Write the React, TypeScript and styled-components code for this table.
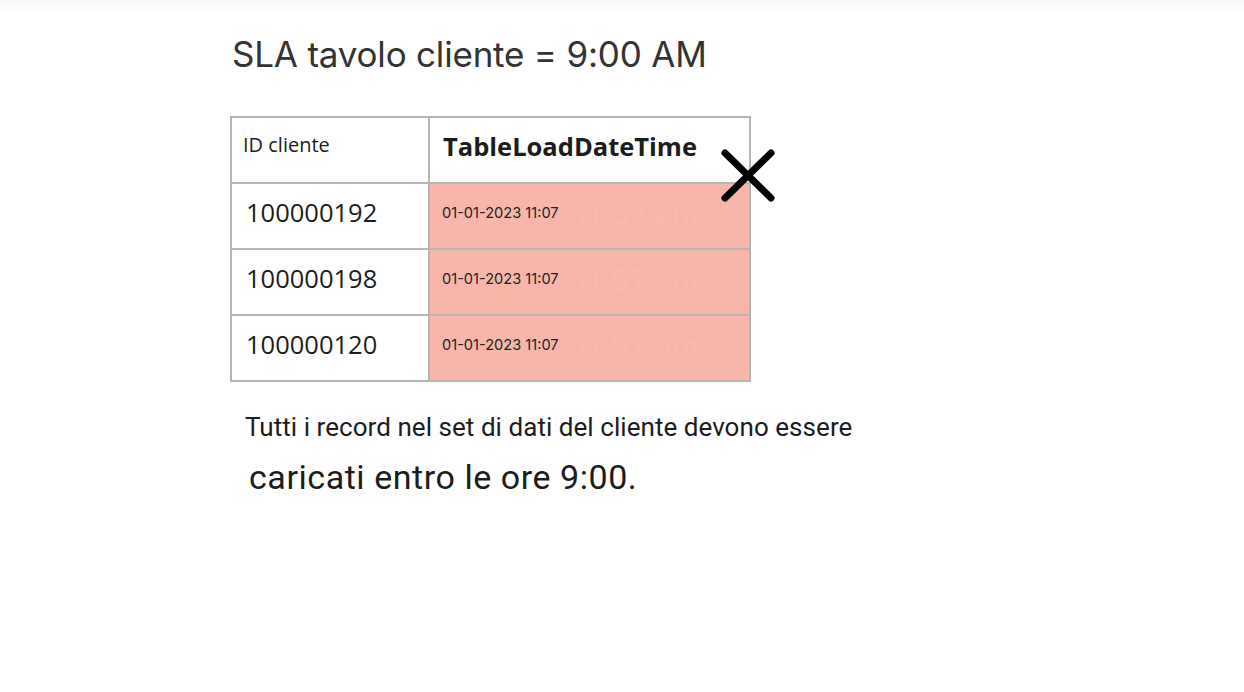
import styled, { createGlobalStyle } from "styled-components"

const GlobalStyle = createGlobalStyle`
  html, body {
    margin: 0;
    padding: 0;
    background: #ffffff;
  }
  body {
    font-family: "Open Sans", "Noto Sans", sans-serif;
  }
`

const rows = [
  { id: "100000192", time: "01-01-2023 11:07" },
  { id: "100000198", time: "01-01-2023 11:07" },
  { id: "100000120", time: "01-01-2023 11:07" },
]

const App = () => {
  return (
    <>
      <GlobalStyle />
      <Page>
        <Slide>
          <Title>SLA tavolo cliente = 9:00 AM</Title>
          <TableWrap>
            <Table>
              <thead>
                <tr>
                  <HeadCell>ID cliente</HeadCell>
                  <HeadCell $bold>TableLoadDateTime</HeadCell>
                </tr>
              </thead>
              <tbody>
                {rows.map((r) => (
                  <tr key={r.id}>
                    <IdCell>{r.id}</IdCell>
                    <TimeCell>
                      {r.time}
                      <Ghost>11:57 am</Ghost>
                    </TimeCell>
                  </tr>
                ))}
              </tbody>
            </Table>
            <Cross viewBox="0 0 56 54" aria-hidden>
              <path d="M5 4 L51 49 M51 4 L5 49" />
            </Cross>
          </TableWrap>
          <Caption>Tutti i record nel set di dati del cliente devono essere</Caption>
          <CaptionLarge>caricati entro le ore 9:00.</CaptionLarge>
        </Slide>
      </Page>
    </>
  )
}

const Page = styled.div`
  width: 1244px;
  height: 692px;
  overflow: hidden;
  background: linear-gradient(to bottom, #f7f7f7 0px, #ffffff 14px);
`

const Slide = styled.div`
  display: flex;
  flex-direction: column;
  align-items: flex-start;
  padding: 29px 0 0 230px;
`

const Title = styled.h1`
  margin: 0 0 0 2px;
  font-family: Inter, "Open Sans", sans-serif;
  font-weight: 400;
  font-size: 35px;
  line-height: 50px;
  color: #333333;
  letter-spacing: -0.2px;
`

const TableWrap = styled.div`
  position: relative;
  margin-top: 37px;
`

const Table = styled.table`
  border-collapse: collapse;
  border: 2px solid #b5b5b5;
  width: 521px;
  table-layout: fixed;

  tr {
    height: 66px;
  }
`

const HeadCell = styled.th<{ $bold?: boolean }>`
  border: 2px solid #b5b5b5;
  text-align: left;
  vertical-align: top;
  width: ${(p) => (p.$bold ? "auto" : "185px")};
  padding: ${(p) => (p.$bold ? "13px 0 0 13px" : "15px 0 0 11px")};
  font-family: "Open Sans", "Noto Sans", sans-serif;
  font-size: ${(p) => (p.$bold ? "25.5px" : "20px")};
  font-weight: ${(p) => (p.$bold ? 700 : 400)};
  color: #1c1c1c;
  line-height: 1.2;
  white-space: nowrap;
`

const IdCell = styled.td`
  border: 2px solid #b5b5b5;
  padding: 0 0 8px 14px;
  font-family: "Open Sans", "Noto Sans", sans-serif;
  font-size: 25.5px;
  color: #1c1c1c;
  vertical-align: middle;
`

const TimeCell = styled.td`
  border: 2px solid #b5b5b5;
  background: #f8b6ab;
  padding: 0 0 4px 12px;
  font-family: Inter, "Open Sans", sans-serif;
  font-size: 14.6px;
  color: #222222;
  vertical-align: middle;
  white-space: nowrap;
`

const Ghost = styled.span`
  margin-left: 16px;
  font-size: 30px;
  font-weight: 700;
  color: #f8b8ad;
  vertical-align: middle;
`

const Cross = styled.svg`
  position: absolute;
  left: 490px;
  top: 33px;
  width: 56px;
  height: 54px;

  path {
    fill: none;
    stroke: #000000;
    stroke-width: 7;
    stroke-linecap: round;
  }
`

const Caption = styled.p`
  margin: 29px 0 0 15px;
  font-family: Roboto, "Liberation Sans", sans-serif;
  font-size: 26px;
  line-height: 32px;
  color: #1c1c1c;
  letter-spacing: 0.05px;
`

const CaptionLarge = styled.p`
  margin: 13px 0 0 19px;
  font-family: Roboto, "Liberation Sans", sans-serif;
  font-size: 34px;
  line-height: 42px;
  color: #1c1c1c;
  letter-spacing: 0.55px;
`

export default App
